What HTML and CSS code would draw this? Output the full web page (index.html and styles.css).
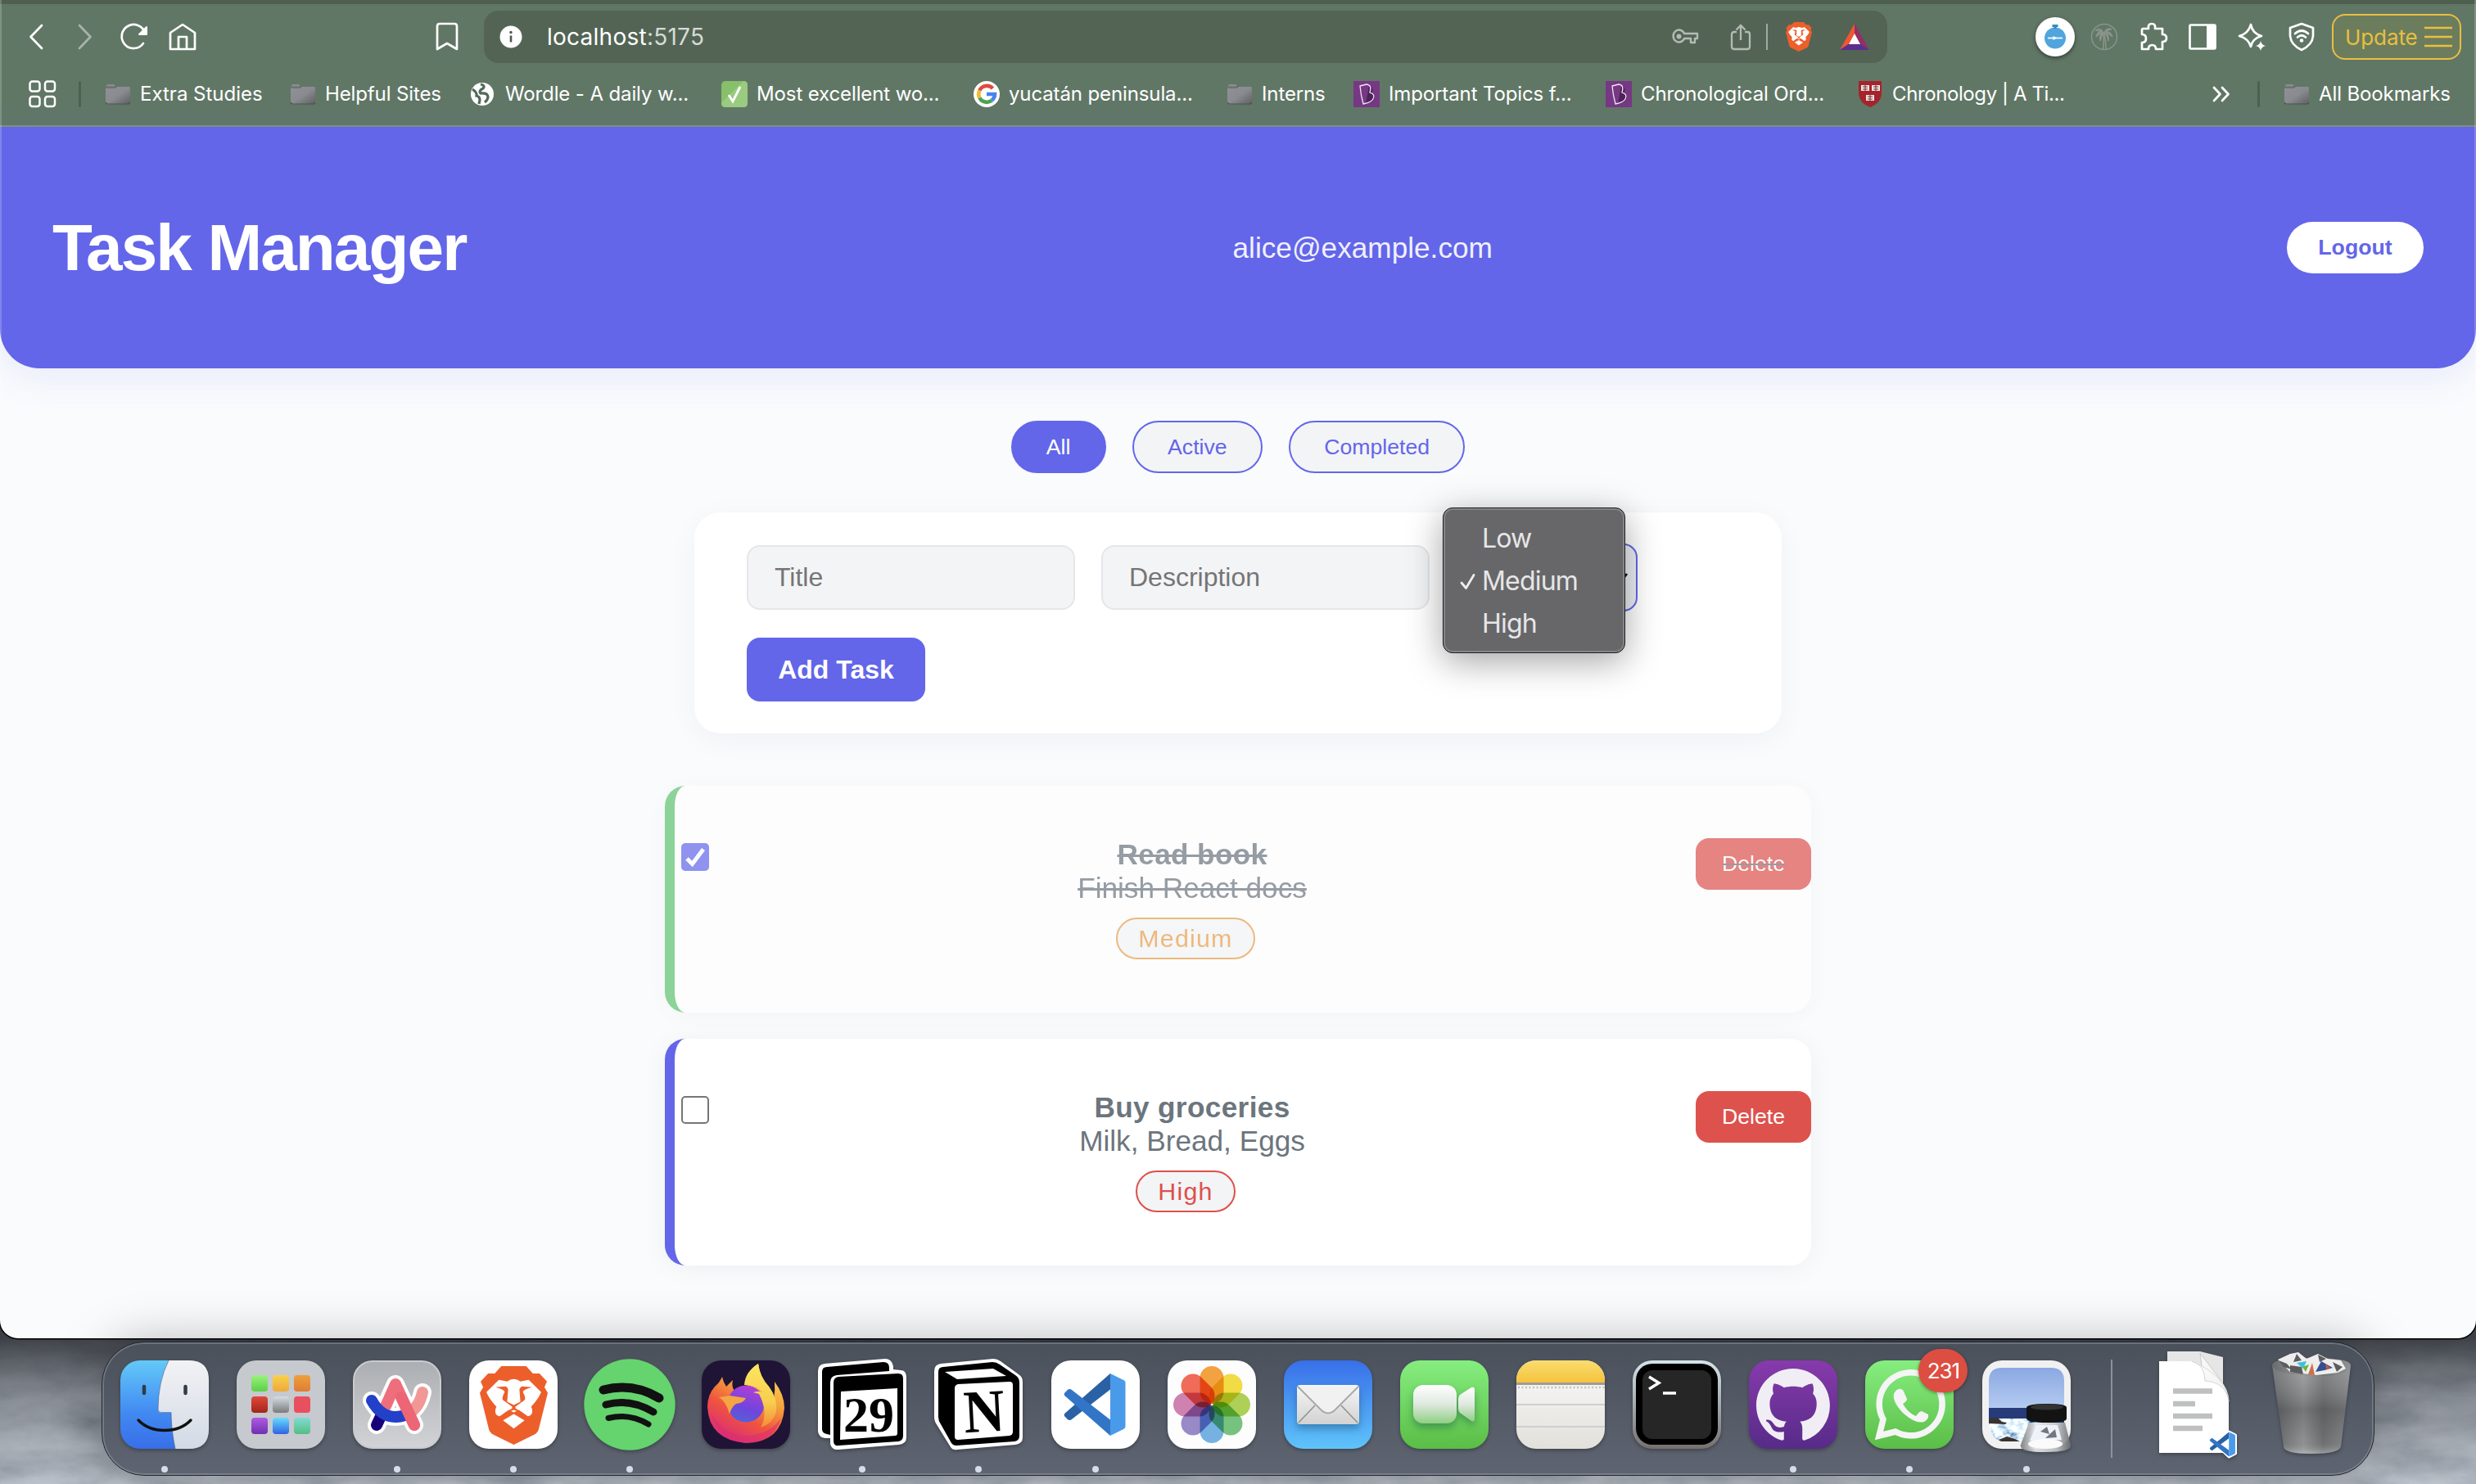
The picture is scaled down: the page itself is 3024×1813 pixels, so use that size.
FILE: index.html
```html
<!DOCTYPE html>
<html lang="en">
<head>
<meta charset="utf-8">
<title>Task Manager</title>
<link rel="stylesheet" href="styles.css">
</head>
<body>
<svg class="defs" width="0" height="0" aria-hidden="true">
  <defs>
    <linearGradient id="folderFill" x1="0" y1="0" x2="1" y2="1"><stop offset="0" stop-color="#8f9096"/><stop offset=".5" stop-color="#8a8b90"/><stop offset="1" stop-color="#5e5f61"/></linearGradient>
    <linearGradient id="lionFill" x1="0" y1="0" x2="1" y2="0"><stop offset=".2" stop-color="#dc6c3c"/><stop offset=".65" stop-color="#d84a30"/></linearGradient>
    <symbol id="folder" viewBox="0 0 32 32"><path d="M2 6q0-2 2-2h7l2 2.500h-11z" fill="#8b8d90"/><path d="M1 7h29q1 0 1 1.500V26q0 2.500-2.500 2.500h-25Q1 28.500 1 26z" fill="url(#folderFill)"/><path d="M1.500 26q0 2 2 2h25q2 0 2-2" fill="none" stroke="#4d504f" stroke-width="1.200"/><path d="M1 8h12l1.500-1.500" fill="none" stroke="#555" stroke-width="1"/></symbol>
    <symbol id="lion" viewBox="0 0 82 97">
      <path d="M26 0H56L64 9L72 9L81 19L78 26L82 33L71 78Q70 82 65 85L41 97L17 85Q12 82 11 78L0 33L4 26L1 19L10 9L18 9Z" class="lion-head"/>
      <path d="M23 17L33 19Q41 13 49 19L59 17L74 32Q71 40 62 50Q66 60 58 62L47 54L41 57L35 54L24 62Q16 60 20 50Q11 40 8 32Z" fill="#fff"/>
      <path d="M19 26L31 25Q35 27 34 31L33 44L41 48L49 44L48 31Q47 27 51 25L63 26Q52 29 52 32Q56 39 54 42L43 50V52L54 59L41 54L28 59L39 52V50L28 42Q26 39 30 32Q30 29 19 26Z" class="lion-head"/>
      <path d="M41 59L54 67L41 77L28 67Z" fill="#fff"/>
    </symbol>
    <symbol id="code" viewBox="0 0 78 78"><path d="M58 0L1 50q-2 2 0 4l4 4q2 1 4 0L58 20z" fill="#2961a4"/><path d="M58 78L1 28q-2-2 0-4l4-4q2-1 4 0L58 58z" fill="#3275c6"/><path d="M58 0L74 8q3 1 3 4V66q0 3-3 4L58 78z" fill="#4a9aea"/></symbol>
    <symbol id="bpage" viewBox="0 0 32 32"><path d="M0 0h32v32H0z" fill="#763784"/><path d="M15 28l6-2q6-2 4-8l-2-4q2-6-4-8z" fill="#4c2258"/><path d="M8 6l8-2q7 1 4 10q7 2 4 8q-2 4-12 6q-3-11-4-22z" fill="none" stroke="#f3e6f5" stroke-width="1.300"/></symbol>
  </defs>
</svg>

<svg class="wallpaper" width="3024" height="200" viewBox="0 0 3024 200" preserveAspectRatio="none" aria-hidden="true">
  <defs>
    <filter id="clouds" x="0" y="0" width="100%" height="100%"><feTurbulence type="fractalNoise" baseFrequency=".012 .03" numOctaves="5" seed="8"/><feColorMatrix values=".3 .15 0 0 .215  .3 .16 0 0 .245  .3 .16 0 0 .3  0 0 0 0 1"/></filter>
    <linearGradient id="wallShade" x1="0" y1="0" x2="0" y2="1"><stop offset=".1" stop-color="#14171c" stop-opacity=".75"/><stop offset=".45" stop-color="#14171c" stop-opacity=".3"/><stop offset="1" stop-color="#14171c" stop-opacity="0"/></linearGradient>
  </defs>
  <rect width="3024" height="200" filter="url(#clouds)"/><rect width="3024" height="200" fill="url(#wallShade)"/>
</svg>

<main class="window">
  <section class="chrome">
    <div class="toolbar">
      <svg class="i-back" width="20" height="34" viewBox="0 0 20 34"><path d="M17 3L3.500 17L17 31" class="ln"/></svg>
      <svg class="i-fwd" width="20" height="34" viewBox="0 0 20 34"><path d="M3 3L16.500 17L3 31" class="ln"/></svg>
      <svg class="i-reload" width="36" height="36" viewBox="0 0 36 36"><path d="M29 26A14.500 14.500 0 1 1 31 13" class="ln"/><path d="M24 15h9V6z" fill="#fff" stroke="#fff" stroke-width="2" stroke-linejoin="round"/></svg>
      <svg class="i-home" width="34" height="36" viewBox="0 0 34 36"><path d="M2 13L17 3L32 13V33H2zM12 33V18H22V33" class="ln"/></svg>
      <svg class="i-mark" width="28" height="36" viewBox="0 0 28 36"><path d="M2 5q0-3 3-3H23q3 0 3 3V33L14 26L2 33z" class="ln"/></svg>
      <div class="address">
        <svg width="28" height="28" viewBox="0 0 28 28"><circle cx="14" cy="14" r="13.500" fill="#fff"/><path d="M14 12.500V20.500" stroke="#4a5a4c" stroke-width="2.600"/><circle cx="14" cy="8.500" r="1.700" fill="#4a5a4c"/></svg>
        <span class="url">localhost<span>:5175</span></span>
        <svg class="i-key" width="34" height="22" viewBox="0 0 34 22"><path d="M16 7H32V13H29V18H24V13H16A7 7.500 0 1 1 16 7z" fill="none" stroke="#b3bab3" stroke-width="2.400" stroke-linejoin="round"/><circle cx="9.500" cy="10.500" r="3" fill="#b3bab3"/></svg>
        <svg class="i-share" width="26" height="34" viewBox="0 0 26 34"><path d="M8 11H5q-3 0-3 3V29q0 3 3 3H21q3 0 3-3V14q0-3-3-3H18M13 21V3M7.500 8.500L13 3L18.500 8.500" fill="none" stroke="#b3bab3" stroke-width="2.300"/></svg>
        <i class="rule"></i>
        <svg class="i-brave" width="32" height="36" viewBox="0 0 82 97" preserveAspectRatio="none"><use href="#lion"/></svg>
        <svg class="i-bat" width="36" height="32" viewBox="0 0 36 32"><path d="M18 0L0 32L12 24L18 12z" fill="#f0562f"/><path d="M18 0L36 32L24 24L18 12z" fill="#962d67"/><path d="M0 32L12 24H24L36 32z" fill="#5b2f8e"/><path d="M18 12L25 25H11z" fill="#fff"/></svg>
      </div>
      <div class="extensions">
        <svg class="i-timer" width="48" height="48" viewBox="0 0 48 48"><circle cx="24" cy="24" r="24" fill="#fff"/><circle cx="24" cy="25.500" r="13" fill="#51a5dc"/><path d="M20.500 10.500h7M24 10v4" stroke="#3989bd" stroke-width="3"/><path d="M15 25.500h18" stroke="#fff" stroke-width="1.600"/><path d="M21.500 23l5 2.500l-5 2.500z" fill="#fff"/></svg>
        <svg class="i-palm" width="34" height="34" viewBox="0 0 34 34" fill="none" stroke="#8a958b" stroke-width="1.500"><circle cx="17" cy="17" r="15.500"/><path d="M15.500 32Q17 22 16 13M19 32Q19 22 17 13M16.500 12Q10 8 7 17Q11 12 16.500 12M17 12Q23 8 27 17Q23 12 17 12M16.500 12Q10 14 12 22Q13 16 16.500 12M17.500 12Q23 14 22 22Q21 15 17.500 12M16 12Q12 5 7 9Q12 9 16 12M17 12Q20 5 26 8Q20 8 17 12"/></svg>
        <svg class="i-puzzle" width="36" height="36" viewBox="0 0 36 36"><path d="M5 8H12Q11 2 16 2T20 8H29V15Q34 15 34 19.500T29 24V33H21Q21 28 16.500 28T12 33H4V25Q9 25 9 20T4 15V9z" class="ln"/></svg>
        <svg class="i-side" width="34" height="32" viewBox="0 0 34 32"><path d="M1.500 2.500q0-1 1-1H31.500q1 0 1 1V29.500q0 1-1 1H2.500q-1 0-1-1z" class="ln"/><path d="M22 1h11v30H22z" fill="#fff"/></svg>
        <svg class="i-spark" width="36" height="36" viewBox="0 0 36 36"><path d="M17 3Q19 14 30 17Q19 20 17 30Q14 20 3 17Q14 14 17 3z" class="ln"/><path d="M29 23Q30 28 35 29Q30 30 29 35Q28 30 23 29Q28 28 29 23z" fill="#fff"/></svg>
        <svg class="i-vpn" width="32" height="36" viewBox="0 0 32 36"><path d="M16 2L30 7V17Q29 28 16 34Q3 28 2 17V7z" class="ln"/><path d="M8 14Q16 7 24 14M11 18.500Q16 14 21 18.500" class="ln"/><circle cx="16" cy="22.500" r="2.300" fill="#fff"/></svg>
        <div class="update"><span>Update</span><svg width="34" height="28" viewBox="0 0 34 28"><path d="M0 3H34M0 14H34M0 25H34" stroke="#e9bf40" stroke-width="2.600"/></svg></div>
      </div>
    </div>
    <nav class="bookmarks">
      <svg class="i-grid" width="34" height="34" viewBox="0 0 34 34"><g fill="none" stroke="#fff" stroke-width="2.500"><rect x="1.500" y="1.500" width="12" height="12" rx="3"/><rect x="20" y="1.500" width="12" height="12" rx="3"/><rect x="1.500" y="20" width="12" height="12" rx="3"/><rect x="20" y="20" width="12" height="12" rx="3"/></g></svg>
      <i class="rule2"></i>
      <a class="bm w1"><svg><use href="#folder"/></svg><span>Extra Studies</span></a>
      <a class="bm w2"><svg><use href="#folder"/></svg><span>Helpful Sites</span></a>
      <a class="bm w3"><svg viewBox="0 0 32 32"><circle cx="15" cy="16" r="14" fill="#fff"/><path d="M3 10Q9 14 8 18Q12 19 12 23L11 28M13 4Q19 5 16 9Q10 12 13 15Q21 14 22 19Q22 23 18 26" fill="none" stroke="#54685a" stroke-width="3.200"/></svg><span>Wordle - A daily w...</span></a>
      <a class="bm w4"><svg viewBox="0 0 32 32"><rect width="32" height="32" rx="5" fill="#87c069"/><path d="M0 27L27 0q5 0 5 5V27q0 5-5 5H5q-5 0-5-5z" fill="#9acb80"/><path d="M9 17l5 8L23 7" fill="none" stroke="#fff" stroke-width="2.800"/></svg><span>Most excellent wo...</span></a>
      <a class="bm w5"><svg viewBox="0 0 32 32"><circle cx="16" cy="16" r="16" fill="#fff"/><g fill="none" stroke-width="4.600"><path d="M23.500 9A10 10 0 0 0 7.300 11.500" stroke="#dd4b3e"/><path d="M7.300 11.500A10 10 0 0 0 7.300 20.500" stroke="#f1bb2f"/><path d="M7.300 20.500A10 10 0 0 0 22.500 23.500" stroke="#4da353"/><path d="M22.500 23.500A10 10 0 0 0 26 16H16" stroke="#4a83ed"/></g></svg><span>yucatán peninsula...</span></a>
      <a class="bm w6"><svg><use href="#folder"/></svg><span>Interns</span></a>
      <a class="bm w7"><svg><use href="#bpage"/></svg><span>Important Topics f...</span></a>
      <a class="bm w8"><svg><use href="#bpage"/></svg><span>Chronological Ord...</span></a>
      <a class="bm w9"><svg viewBox="0 0 32 32"><path d="M2 0H30V16Q29 27 16 32Q3 27 2 16z" fill="#a5242c"/><path d="M5 5h10v7H5zM18 5h10v7H18zM11 17h10v7H11z" fill="#f3e3e3"/><path d="M7 7h6M7 10h6M20 7h6M20 10h6M13 19h6M13 22h6M10 5v7M23 5v7M16 17v7" stroke="#6d3535" stroke-width="1"/></svg><span>Chronology | A Ti...</span></a>
      <svg class="i-more" width="22" height="20" viewBox="0 0 22 20"><path d="M2 2L9.500 10L2 18M12 2L19.500 10L12 18" class="ln"/></svg>
      <i class="rule2"></i>
      <a class="bm w10"><svg><use href="#folder"/></svg><span>All Bookmarks</span></a>
    </nav>
  </section>

  <div class="app">
    <header class="app-header">
      <h1>Task Manager</h1>
      <span class="email">alice@example.com</span>
      <button class="logout">Logout</button>
    </header>

    <div class="filters">
      <button class="filter active">All</button>
      <button class="filter">Active</button>
      <button class="filter">Completed</button>
    </div>

    <form class="task-form">
      <div class="fields">
        <input placeholder="Title">
        <input placeholder="Description">
        <div class="select">
          <svg width="24" height="16" viewBox="0 0 24 16"><path d="M3 3L11 12L18 3" fill="none" stroke="#111" stroke-width="2.600"/></svg>
          <ul class="menu">
            <li>Low</li>
            <li><svg width="21" height="22" viewBox="0 0 21 22"><path d="M2 12L7.500 18.500L17 2.500" fill="none" stroke="#eee" stroke-width="2.800" stroke-linecap="round" stroke-linejoin="round"/></svg>Medium</li>
            <li>High</li>
          </ul>
        </div>
      </div>
      <button class="add" type="button">Add Task</button>
    </form>

    <div class="tasks">
      <article class="task done">
        <span class="check checked"><svg width="34" height="34" viewBox="0 0 34 34"><path d="M7 19L13.500 25.500L27 7.500" fill="none" stroke="#fff" stroke-width="5"/></svg></span>
        <div class="content"><strong>Read book</strong><span class="desc">Finish React docs</span><span class="badge medium">Medium</span></div>
        <button class="delete">Delete</button>
      </article>
      <article class="task">
        <span class="check"></span>
        <div class="content"><strong>Buy groceries</strong><span class="desc">Milk, Bread, Eggs</span><span class="badge high">High</span></div>
        <button class="delete">Delete</button>
      </article>
    </div>
  </div>
</main>

<footer class="dock">
  <div class="slot run"><svg viewBox="0 0 108 108">
    <defs><linearGradient id="fb" x2="0" y2="1"><stop stop-color="#63c9f9"/><stop offset=".6" stop-color="#4189f1"/><stop offset="1" stop-color="#386ee8"/></linearGradient><linearGradient id="fw" x2="0" y2="1"><stop stop-color="#f2f2f4"/><stop offset="1" stop-color="#d2dae6"/></linearGradient></defs>
    <rect width="108" height="108" rx="24" fill="url(#fb)"/><path d="M59 0H84Q108 0 108 24V84Q108 108 84 108H67Q62 84 62 64H50Q46 64 46 60Q46 26 59 0z" fill="url(#fw)"/><path d="M59 0Q46 26 46 60Q46 63 50 63.500H62Q62 84 67 108" fill="none" stroke="#3c5b86" stroke-opacity=".6"/><path d="M29 32V40M79.500 32V40" stroke="#333b45" stroke-width="4.500" stroke-linecap="round"/><path d="M22 73Q34 85.500 54 85.500T86 73" fill="none" stroke="#111" stroke-width="3.400" stroke-linecap="round"/></svg></div>
  <div class="slot"><svg viewBox="0 0 108 108">
    <defs><linearGradient id="l1" x2="0" y2="1"><stop stop-color="#9af27c"/><stop offset="1" stop-color="#5bd048"/></linearGradient><linearGradient id="l2" x2="0" y2="1"><stop stop-color="#f7d24b"/><stop offset="1" stop-color="#f0a83a"/></linearGradient><linearGradient id="l3" x2="0" y2="1"><stop stop-color="#eda13b"/><stop offset="1" stop-color="#e07c35"/></linearGradient><linearGradient id="l4" x2="0" y2="1"><stop stop-color="#e0493b"/><stop offset="1" stop-color="#a3261a"/></linearGradient><linearGradient id="l5" x2="0" y2="1"><stop stop-color="#d5dde4"/><stop offset="1" stop-color="#797b7c"/></linearGradient><linearGradient id="l7" x2="0" y2="1"><stop stop-color="#af5be3"/><stop offset="1" stop-color="#7030b0"/></linearGradient><linearGradient id="l8" x2="0" y2="1"><stop stop-color="#67dcfb"/><stop offset="1" stop-color="#2e62e4"/></linearGradient><linearGradient id="l9" x2="0" y2="1"><stop stop-color="#7fdcd3"/><stop offset="1" stop-color="#55bd83"/></linearGradient></defs>
    <rect width="108" height="108" rx="24" fill="#c6c9cd"/><rect x="18" y="18" width="20" height="20" rx="4" fill="url(#l1)"/><rect x="44" y="18" width="20" height="20" rx="4" fill="url(#l2)"/><rect x="70" y="18" width="20" height="20" rx="4" fill="url(#l3)"/><rect x="18" y="44" width="20" height="20" rx="4" fill="url(#l4)"/><rect x="44" y="44" width="20" height="20" rx="4" fill="url(#l5)"/><rect x="70" y="44" width="20" height="20" rx="4" fill="#e9505f"/><rect x="18" y="70" width="20" height="20" rx="4" fill="url(#l7)"/><rect x="44" y="70" width="20" height="20" rx="4" fill="url(#l8)"/><rect x="70" y="70" width="20" height="20" rx="4" fill="url(#l9)"/></svg></div>
  <div class="slot run"><svg viewBox="0 0 108 108">
    <defs><linearGradient id="ab" x2="0" y2="1"><stop stop-color="#abaeb2"/><stop offset="1" stop-color="#d2d3d6"/></linearGradient></defs>
    <rect x="1" y="1" width="106" height="106" rx="23" fill="url(#ab)" stroke="#c9cbcf" stroke-width="2"/>
    <g fill="none" stroke-linecap="round" stroke-linejoin="round"><g stroke="#fff" stroke-width="22"><path d="M29 79L52 29L75 79M23 49Q34 69 52 69Q79 67 85 39"/></g><path d="M29 79L38 60" stroke="#170079" stroke-width="14"/><path d="M85 39Q79 67 52 69" stroke="#f19897" stroke-width="14"/><path d="M40 56L52 29L75 79" stroke="#ee6f7b" stroke-width="14"/><path d="M23 49Q34 69 52 69Q58 69 62 67.500" stroke="#2340c8" stroke-width="14"/><path d="M59 45L75 79" stroke="#ec6675" stroke-width="14"/></g></svg></div>
  <div class="slot run brave"><svg viewBox="0 0 108 108"><rect width="108" height="108" rx="24" fill="#fff"/><svg x="13" y="7" width="83" height="96" viewBox="0 0 82 97" preserveAspectRatio="none"><use href="#lion"/></svg></svg></div>
  <div class="slot run"><svg viewBox="0 0 108 108"><circle cx="54" cy="54" r="55.700" fill="#65d36e"/><g fill="none" stroke="#111" stroke-linecap="round"><path d="M22 36Q58 27 90 46" stroke-width="11"/><path d="M25 54Q55 46 83 63" stroke-width="9"/><path d="M28 70.500Q54 64 77 78" stroke-width="7"/></g></svg></div>
  <div class="slot"><svg viewBox="0 0 108 108">
    <defs><linearGradient id="ff" x1=".8" y1="0" x2=".25" y2="1"><stop stop-color="#fbe15a"/><stop offset=".35" stop-color="#f6a53b"/><stop offset=".65" stop-color="#f0543f"/><stop offset="1" stop-color="#d8287d"/></linearGradient><linearGradient id="fg" x1=".6" y1="0" x2=".3" y2="1"><stop stop-color="#b13fd6"/><stop offset=".6" stop-color="#6f45dc"/><stop offset="1" stop-color="#5163d8"/></linearGradient><linearGradient id="fy" x2="0" y2="1"><stop stop-color="#fbe660"/><stop offset=".6" stop-color="#f8ce4e"/><stop offset="1" stop-color="#f28d38"/></linearGradient></defs>
    <rect width="108" height="108" rx="24" fill="#1f1436"/><path d="M25 20Q26 26 30 32Q34 28 38 24Q36 32 40 37L56 32Q52 16 69 4Q71 20 82 32Q88 40 88 47Q90 36 89 26Q101 42 101 58Q98 100 54 101Q9 97 7 57Q7 42 16 32Q22 27 25 20z" fill="url(#ff)"/><circle cx="54" cy="53" r="22.500" fill="url(#fg)"/><path d="M52 30Q53 14 69 4Q71 20 82 32Q93 46 91 63Q87 77 72 82Q82 64 70 41L63 39Q69 37 75 39Q65 30 52 30z" fill="url(#fy)"/><path d="M21 45L34 43L54 46Q51 52 42 53Q36 57 34 66Q30 50 21 45z" fill="#f6a545"/><path d="M12 66Q28 91 54 92Q83 91 97 70Q88 101 54 101Q22 98 12 66z" fill="#db2d75" opacity=".55"/></svg></div>
  <div class="slot run"><svg viewBox="0 0 108 108"><path d="M0 13Q0 5 8 4L82 -2Q90 -2 92 7V11L101 12Q108 12 108 21V94Q108 102 99 103L25 109Q17 110 15 102V95L9 95Q1 94 0 87z" fill="#fff"/><path d="M5 14Q5 8 11 8L80 2Q87 2 87 9V13L23 18Q15 19 15 27V91L11 90Q5 89 5 84z"/><path d="M19 27Q19 21 25 20L98 16Q104 16 104 22V92Q104 98 98 99L25 104Q19 105 19 98z"/><path d="M28 38L97 34V89Q97 92 94 92L27 97z" fill="#fff"/><text x="62" y="87" text-anchor="middle" class="serif" font-size="62" textLength="62" lengthAdjust="spacingAndGlyphs">29</text></svg></div>
  <div class="slot run"><svg viewBox="0 0 108 108"><path d="M0 13Q0 5 8 4L72 -2Q77 -2 81 1L103 17Q108 20 108 26V94Q108 102 99 103L28 109Q23 110 20 106L4 80Q0 75 0 69z" fill="#fff"/><path d="M5 14Q5 8 11 8L71 2Q76 2 80 5L99 18Q104 21 104 27V92Q104 98 98 99L27 104Q23 104 21 101L8 78Q5 74 5 69z"/><path d="M13 14L72 10L88 19L28 23z" fill="#fff"/><path d="M25 34Q25 30 29 29L92 26Q96 26 96 30V87Q96 91 92 92L29 97Q25 97 25 93z" fill="#fff"/><text x="61" y="87" text-anchor="middle" class="serif" font-size="74" textLength="50" lengthAdjust="spacingAndGlyphs" transform="rotate(-3 61 62)">N</text></svg></div>
  <div class="slot run"><svg viewBox="0 0 108 108"><rect width="108" height="108" rx="24" fill="#fff"/><svg x="15" y="16" width="77" height="76" viewBox="0 0 78 78"><use href="#code"/></svg></svg></div>
  <div class="slot"><svg viewBox="0 0 108 108"><rect width="108" height="108" rx="24" fill="#fdfdfd"/><g class="petals"><rect x="39.500" y="7" width="29" height="46" rx="14.500" fill="#f39b2f"/><rect x="39.500" y="7" width="29" height="46" rx="14.500" fill="#f2dc35" transform="rotate(45 54 54)"/><rect x="39.500" y="7" width="29" height="46" rx="14.500" fill="#a9ce49" transform="rotate(90 54 54)"/><rect x="39.500" y="7" width="29" height="46" rx="14.500" fill="#6dbf75" transform="rotate(135 54 54)"/><rect x="39.500" y="7" width="29" height="46" rx="14.500" fill="#6aaee2" transform="rotate(180 54 54)"/><rect x="39.500" y="7" width="29" height="46" rx="14.500" fill="#9180c4" transform="rotate(225 54 54)"/><rect x="39.500" y="7" width="29" height="46" rx="14.500" fill="#cd78ab" transform="rotate(270 54 54)"/><rect x="39.500" y="7" width="29" height="46" rx="14.500" fill="#f0604c" transform="rotate(315 54 54)"/></g></svg></div>
  <div class="slot"><svg viewBox="0 0 108 108"><defs><linearGradient id="mb" x2="0" y2="1"><stop stop-color="#386fe9"/><stop offset="1" stop-color="#5fc4fa"/></linearGradient><linearGradient id="mw" x2="0" y2="1"><stop stop-color="#f6f6f6"/><stop offset="1" stop-color="#d2d2d2"/></linearGradient></defs><rect width="108" height="108" rx="24" fill="url(#mb)"/><g class="lift"><rect x="16" y="30" width="76" height="48" rx="4" fill="url(#mw)"/></g><path d="M18 76L38 55M90 76L70 55" stroke="#909090" stroke-width="1.500"/><path d="M17 32L46 61Q54 68 62 61L91 32" fill="#f1f1f1" stroke="#aaa" stroke-width="2"/></svg></div>
  <div class="slot"><svg viewBox="0 0 108 108"><defs><linearGradient id="vb" x2="0" y2="1"><stop stop-color="#86ee80"/><stop offset="1" stop-color="#5abd46"/></linearGradient><linearGradient id="vw" x2="0" y2="1"><stop stop-color="#fff"/><stop offset=".5" stop-color="#dfe8df"/><stop offset="1" stop-color="#8fcf83"/></linearGradient></defs><rect width="108" height="108" rx="24" fill="url(#vb)"/><g class="lift"><rect x="16" y="30" width="53" height="47" rx="12" fill="url(#vw)"/><path d="M71 47Q71 44 73 42L87 33Q91 32 91 36V71Q91 76 87 74L73 64Q71 62 71 59z" fill="url(#vw)"/></g></svg></div>
  <div class="slot"><svg viewBox="0 0 108 108"><defs><clipPath id="nc"><rect width="108" height="108" rx="24"/></clipPath><linearGradient id="ny" x2="0" y2="1"><stop stop-color="#fadc70"/><stop offset="1" stop-color="#f5c43d"/></linearGradient><linearGradient id="nw" x2="0" y2="1"><stop stop-color="#fafafa"/><stop offset="1" stop-color="#e2e0da"/></linearGradient></defs><g clip-path="url(#nc)"><rect width="108" height="108" fill="url(#nw)"/><rect width="108" height="27" fill="url(#ny)"/><path d="M0 28.500H108" stroke="#9f9c96" stroke-width="3"/><path d="M2 33H108" stroke="#c4c2c2" stroke-width="2.500" stroke-dasharray="2 2.500"/><path d="M0 54H108M0 81H108" stroke="#cfcfcf" stroke-width="1.800"/></g></svg></div>
  <div class="slot"><svg viewBox="0 0 108 108"><defs><linearGradient id="te" x2="0" y2="1"><stop stop-color="#d4e4ea"/><stop offset="1" stop-color="#75706e"/></linearGradient></defs><rect width="108" height="108" rx="24" fill="url(#te)"/><rect x="4" y="4" width="100" height="99" rx="20"/><rect x="12" y="12" width="84" height="84" rx="12" fill="#262626"/><path d="M20 20L32 27.500L20 35" fill="none" stroke="#fff" stroke-width="3.500"/><path d="M37 40H53" stroke="#fff" stroke-width="3.500"/></svg></div>
  <div class="slot run"><svg viewBox="0 0 108 108"><defs><linearGradient id="gb" x2="0" y2="1"><stop stop-color="#873aac"/><stop offset="1" stop-color="#572b88"/></linearGradient></defs><rect width="108" height="108" rx="24" fill="url(#gb)"/><path transform="translate(9 10) scale(5.620)" fill="#f0eef4" d="M8 0C3.580 0 0 3.580 0 8c0 3.540 2.290 6.530 5.470 7.590.4.070.55-.17.55-.38 0-.19-.01-.82-.01-1.490-2.010.37-2.530-.49-2.690-.94-.09-.23-.48-.94-.82-1.130-.28-.15-.68-.52-.01-.53.63-.01 1.080.58 1.230.82.72 1.210 1.870.87 2.330.66.07-.52.28-.87.51-1.070-1.780-.2-3.640-.89-3.640-3.950 0-.87.31-1.590.82-2.150-.08-.2-.36-1.020.08-2.120 0 0 .67-.21 2.200.82.64-.18 1.320-.27 2-.27.68 0 1.360.09 2 .27 1.530-1.040 2.200-.82 2.200-.82.44 1.100.16 1.920.08 2.120.51.56.82 1.270.82 2.150 0 3.070-1.870 3.750-3.650 3.950.29.25.54.73.54 1.480 0 1.070-.01 1.930-.01 2.200 0 .21.15.46.55.38A8.013 8.013 0 0016 8c0-4.420-3.580-8-8-8z"/></svg></div>
  <div class="slot run"><svg viewBox="0 0 108 108"><rect width="108" height="108" rx="24" fill="url(#vb)"/><path d="M17 92L22 72A38.500 38.500 0 1 1 37 87z" fill="none" stroke="#f5f5f5" stroke-width="7.500" stroke-linejoin="miter"/><path d="M41 35Q45 34 47 38L51 47Q51 50 46 53Q52 64 62 68Q66 62 69 62L77 66Q78 72 72 75Q62 78 47 65Q33 51 35 41Q37 36 41 35z" fill="#f5f5f5"/></svg><b class="count">231</b></div>
  <div class="slot run"><svg viewBox="0 0 108 108"><defs><linearGradient id="sk" x2="0" y2="1"><stop stop-color="#8ba8e2"/><stop offset="1" stop-color="#b4cbf1"/></linearGradient><linearGradient id="jar" x2="1" y2="0"><stop stop-color="#77797c"/><stop offset=".3" stop-color="#e7e8ea"/><stop offset=".7" stop-color="#c5c8cb"/><stop offset="1" stop-color="#6b6d70"/></linearGradient><filter id="foam" x="0" y="0" width="1" height="1"><feTurbulence type="fractalNoise" baseFrequency=".09 .13" numOctaves="3" seed="4"/><feColorMatrix values="2.5 0 0 0 -.5 2.400 0 0 0 -.3 2.200 0 0 0 -.05 0 0 0 0 1"/></filter></defs><rect width="108" height="108" rx="24" fill="#f1f1f1"/><path d="M8 59V25Q8 9 24 9H84Q100 9 100 25V59z" fill="url(#sk)"/><path d="M8 58H100V76H8z" fill="#263b78"/><rect x="8" y="71" width="70" height="28" filter="url(#foam)"/><path d="M8 71L19 70L24 75L30 76L28 78L8 77zM20 97L30 93L40 96L46 99H22z" fill="#393331"/><path d="M8 80V100H28Q12 98 8 80z" fill="#f1f1f1"/><path d="M57 76H101L108 103Q110 112 78 112Q44 112 47 103z" fill="url(#jar)" opacity=".93"/><path d="M66 79H92L97 97L58 98z" fill="#eef3fb"/><path d="M71 87l8-6l3 9zM77 95l12-11l2 10z" fill="#74777c"/><ellipse cx="77" cy="102" rx="21" ry="6" fill="#fbfbfb"/><path d="M54 58Q54 53 79 53T103 58V71Q103 76 79 76T54 71z" fill="#131313"/><ellipse cx="79" cy="57" rx="20" ry="3.500" fill="#333"/></svg></div>
  <i class="dock-rule"></i>
  <div class="slot"><svg viewBox="0 0 108 108"><defs><linearGradient id="dp" x2="1" y2="1"><stop stop-color="#fff"/><stop offset="1" stop-color="#ececec"/></linearGradient></defs><path d="M20 -11H60L88 -4V40H20z" fill="#e6e6e6"/><path d="M60 -9L86 25L76 28L64 22z" fill="#f7f7f7" stroke="#c9c9c9"/><path d="M10 1H50Q66 3 67 24Q92 26 95 50V113H10z" fill="#fff"/><path d="M50 1Q66 5 66 25Q92 27 95 50Q94 20 50 1z" fill="url(#dp)" stroke="#d6d6d6"/><path d="M27 37.500H75M27 53H54M27 68H75M27 83H63" stroke="#bfc0c0" stroke-width="6.500"/><svg x="70" y="86" width="35" height="33" viewBox="-4 -4 86 86" preserveAspectRatio="none"><path d="M58 0L1 50L8 60L28 48L58 78L77 68V10z" fill="#fff" stroke="#fff" stroke-width="10" stroke-linejoin="round"/><use href="#code" width="78" height="78"/></svg></svg></div>
  <div class="slot"><svg viewBox="0 0 108 108"><defs><linearGradient id="tr" x2="1" y2="0"><stop stop-color="#686a6c"/><stop offset=".4" stop-color="#999b9d"/><stop offset=".65" stop-color="#737577"/><stop offset="1" stop-color="#8f9294"/></linearGradient><linearGradient id="td" x2="0" y2="1"><stop offset=".1" stop-color="#aaa" stop-opacity=".2"/><stop offset=".5" stop-color="#333" stop-opacity=".35"/><stop offset=".85" stop-color="#333" stop-opacity=".1"/><stop offset="1" stop-color="#ddd" stop-opacity=".4"/></linearGradient></defs><path d="M6 6Q6 -3 54 -3T102 6L90 105Q88 114 54 114T20 105z" fill="url(#tr)"/><path d="M6 6Q10 17 54 19T102 6L90 105Q88 114 54 114T20 105z" fill="url(#td)"/><path d="M13 -1L28 -8L38 -10L48 -2L62 -8L74 -2L90 0L96 10L86 15L60 18L28 14z" fill="#eee"/><path d="M14 0L24 4L30 11L20 8zM36 -8L42 0L32 2zM28 6l14 2l2 9l-16-3zM62 -7l10 5l-8 4zM80 2l12 6l-7 6z" fill="#5d5d5f"/><path d="M36 3L48 1L44 10z" fill="#3fbfe0"/><path d="M43 8l8-3l-4 9z" fill="#69b445"/><path d="M50 17l5-14l3 15z" fill="#d0704a"/><path d="M59 14L66 1L80 9L70 12z" fill="#354f91"/><path d="M71 4l6 5l-5 2z" fill="#c95b35"/></svg></div>
</footer>
</body>
</html>
```

FILE: styles.css
```css
* { box-sizing: border-box; }
body {
  margin: 0;
  width: 3024px;
  height: 1813px;
  overflow: hidden;
  position: relative;
  display: flex;
  flex-direction: column;
  background: #4a505a;
  font-family: "Liberation Sans", Arial, sans-serif;
}
.defs { position: absolute; }
.wallpaper { position: absolute; left: 0; bottom: 0; }
svg { display: block; flex: none; overflow: visible; }
button, input { font-family: inherit; margin: 0; }

/* Browser window */
.window {
  position: relative;
  height: 1635px;
  flex: none;
  overflow: hidden;
  border-radius: 0 0 22px 22px;
  background: #f9fbfd;
  box-shadow: 0 0 0 1.5px #000;
}
.window::after {
  content: "";
  position: absolute;
  inset: 0;
  border: solid rgba(255, 255, 255, .2);
  border-width: 0 2px;
  border-radius: inherit;
}
.chrome {
  height: 155px;
  background: #617766;
  border-top: 5px solid #4e5f50;
  border-bottom: 2px solid #7f9280;
  font-family: Inter, sans-serif;
  color: #fff;
}
.ln { fill: none; stroke: #fff; stroke-width: 2.7; stroke-linecap: round; stroke-linejoin: round; }
.lion-head { fill: #ec5f2b; }
.brave .lion-head { fill: url(#lionFill); }
.toolbar { display: flex; align-items: center; height: 80px; }
.i-back { margin-left: 34px; }
.i-fwd { margin-left: 40px; opacity: .45; }
.i-reload { margin-left: 32px; }
.i-home { margin-left: 24px; }
.i-mark { margin-left: 292px; }
.address {
  display: flex;
  align-items: center;
  width: 1714px;
  height: 64px;
  margin-left: 31px;
  padding-left: 19px;
  border-radius: 18px;
  background: #536455;
}
.url { width: 1403px; padding-left: 30px; font-size: 28px; letter-spacing: .25px; }
.url span { color: #d6dbd5; }
.i-share { margin-left: 38px; }
.rule { width: 2px; height: 32px; margin-left: 18px; background: #a1aaa1; }
.i-brave { margin-left: 22px; }
.i-bat { margin-left: 34px; }
.extensions { display: flex; align-items: center; margin-left: 181px; }
.i-timer { border-radius: 50%; box-shadow: 0 2px 5px rgba(0, 0, 0, .5); }
.i-palm { margin-left: 19px; }
.i-puzzle { margin-left: 25px; }
.i-side { margin-left: 25px; }
.i-spark { margin-left: 25px; }
.i-vpn { margin-left: 27px; }
.update {
  display: flex;
  align-items: center;
  justify-content: space-between;
  width: 158px;
  height: 56px;
  margin-left: 21px;
  padding: 0 9px 0 14px;
  border: 2px solid #e9bf40;
  border-radius: 16px;
  background: #6b7d5d;
  color: #e9bf40;
  font-size: 26px;
  letter-spacing: -.1px;
}
.bookmarks { display: flex; align-items: center; height: 60px; }
.i-grid { margin-left: 35px; }
.rule2 { width: 3px; height: 32px; margin: 0 29px 0 27px; background: #4b6050; border-radius: 2px; }
.bm { display: flex; align-items: center; flex: none; white-space: nowrap; font-size: 24px; letter-spacing: -.12px; }
.bm svg { width: 32px; height: 32px; margin-right: 11px; }
.bm span { margin-top: -1px; }
.w1 { width: 226px; letter-spacing: 0; }
.w2 { width: 220px; }
.w3 { width: 307px; }
.w4 { width: 308px; }
.w5 { width: 309px; }
.w6 { width: 155px; }
.w7 { width: 308px; }
.w8 { width: 307px; }
.w9 { width: 434px; letter-spacing: -.4px; }
.i-more + .rule2 { margin-left: 33px; }

/* Page header */
.app-header {
  display: flex;
  align-items: center;
  justify-content: space-between;
  height: 295px;
  padding: 0 64px;
  border-radius: 0 0 48px 48px;
  background: #6366e9;
  color: #fff;
  box-shadow: 0 8px 48px rgba(99, 102, 233, .12);
}
h1 { margin: 0; font-size: 80px; letter-spacing: -1.85px; }
.email { margin-right: 34px; font-size: 35.2px; color: #f0f0fd; }
.logout {
  width: 167px;
  height: 63px;
  padding: 0;
  border: 0;
  border-radius: 32px;
  background: #fff;
  color: #6366e9;
  font-size: 26.67px;
  font-weight: bold;
}

/* Filters */
.filters { display: flex; justify-content: center; gap: 32px; margin-top: 64px; }
.filter {
  height: 64px;
  padding: 0 41.3px;
  border: 2px solid #6366e9;
  border-radius: 32px;
  background: #f3f4f6;
  color: #6366e9;
  font-size: 26.67px;
}
.filter.active { background: #6366e9; color: #fff; }

/* New task form */
.task-form {
  width: 1328px;
  height: 270px;
  margin: 48px auto 0;
  padding: 40px 64px;
  border-radius: 32px;
  background: #fff;
  box-shadow: 0 8px 36px rgba(20, 30, 40, .045);
}
.fields { display: flex; align-items: center; gap: 32px; height: 79px; }
.fields input {
  width: 401px;
  height: 79px;
  padding: 0 32px;
  border: 2px solid #e5e6ea;
  border-radius: 16px;
  background: #f3f4f6;
  font-size: 32px;
}
.fields input::placeholder { color: #757575; }
.select {
  position: relative;
  display: flex;
  align-items: center;
  justify-content: flex-end;
  width: 222px;
  height: 83px;
  padding-right: 5px;
  border: 2px solid #6366e9;
  border-radius: 17px;
  background: #eef0f5;
}
.menu {
  position: absolute;
  left: -18px;
  top: -46px;
  width: 223px;
  height: 178px;
  margin: 0;
  padding: 11px 2px;
  list-style: none;
  border: 1px solid #1e1e1e;
  border-radius: 12px;
  background: #67676a;
  box-shadow: inset 0 0 0 2px #858587, 0 10px 44px rgba(0, 0, 0, .36);
  color: #e6e6e7;
  font: 32px/52px Inter, sans-serif;
  letter-spacing: -.8px;
}
.menu li { position: relative; padding-left: 45px; }
.menu svg { position: absolute; left: 18px; top: 16px; }
.add {
  display: block;
  width: 218px;
  height: 78px;
  margin-top: 34px;
  padding: 0;
  border: 0;
  border-radius: 16px;
  background: #6366e9;
  color: #fff;
  font-size: 32px;
  font-weight: bold;
}

/* Task list */
.tasks { display: flex; flex-direction: column; gap: 32px; width: 1400px; margin: 64px auto 0; }
.task {
  display: flex;
  align-items: flex-start;
  height: 277px;
  padding-left: 8px;
  border-left: 12px solid #6366e9;
  border-radius: 25px;
  background: #fff;
  color: #6c757d;
  box-shadow: 0 4px 32px rgba(20, 30, 40, .05);
}
.task.done { opacity: .7; border-color: #5fc36f; }
.check { width: 34px; height: 34px; margin-top: 70px; border: 2px solid #767676; border-radius: 5px; background: #fff; }
.check.checked { border: 0; background: #6366e9; }
.content {
  flex: 1;
  display: flex;
  flex-direction: column;
  align-items: center;
  margin-right: 25px;
  padding-top: 63px;
  font-size: 35.2px;
  line-height: 41px;
}
.content strong { letter-spacing: .35px; }
.done strong, .done .desc, .done .delete { text-decoration: line-through; }
.done .delete { text-decoration-color: #6c757d; }
.badge {
  height: 51px;
  margin: 16px 16px 0 0;
  padding: 0 25.6px;
  border: 2px solid;
  border-radius: 26px;
  background: #f3f4f6;
  font-size: 30.4px;
  line-height: 47px;
  letter-spacing: 1.2px;
}
.medium { color: #e99e48; }
.high { color: #dd504b; }
.delete {
  width: 141px;
  height: 63px;
  margin-top: 64px;
  padding: 0;
  border: 0;
  border-radius: 16px;
  background: #dd524d;
  color: #fff;
  font-size: 26.67px;
}

/* Dock */
.dock {
  position: relative;
  display: flex;
  align-items: center;
  flex: none;
  width: 2776px;
  height: 164px;
  margin: 4px 0 0 124px;
  padding-left: 4.5px;
  border: 1px solid #23272c;
  border-radius: 52px;
  background: linear-gradient(#4a515b, #5e6471);
  box-shadow: inset 0 0 0 2px rgba(170, 178, 190, .35), 0 0 60px rgba(0, 0, 0, .28);
}
.slot { position: relative; flex: none; display: flex; justify-content: center; width: 142.13px; height: 108px; margin-bottom: 10px; }
.slot > svg { width: 108px; height: 108px; filter: drop-shadow(0 2px 2px rgba(0, 0, 0, .3)); }
.run::after {
  content: "";
  position: absolute;
  left: 67px;
  top: 129px;
  width: 8px;
  height: 8px;
  border-radius: 50%;
  background: #d7dce8;
}
.serif { font-family: "Liberation Serif", serif; font-weight: bold; }
.petals rect { mix-blend-mode: multiply; opacity: .92; }
.lift { filter: drop-shadow(0 5px 5px rgba(0, 50, 60, .35)); }
.count {
  position: absolute;
  left: 82px;
  top: -14px;
  width: 60px;
  height: 53px;
  border-radius: 27px;
  background: #dc4e41;
  color: #fff;
  font: 26px/53px Inter, sans-serif;
  letter-spacing: -1px;
  text-align: center;
  box-shadow: 0 1px 4px rgba(0, 0, 0, .4);
}
.dock-rule { width: 2px; height: 120px; margin: 0 30px 0 32px; background: #8c929c; }
```
